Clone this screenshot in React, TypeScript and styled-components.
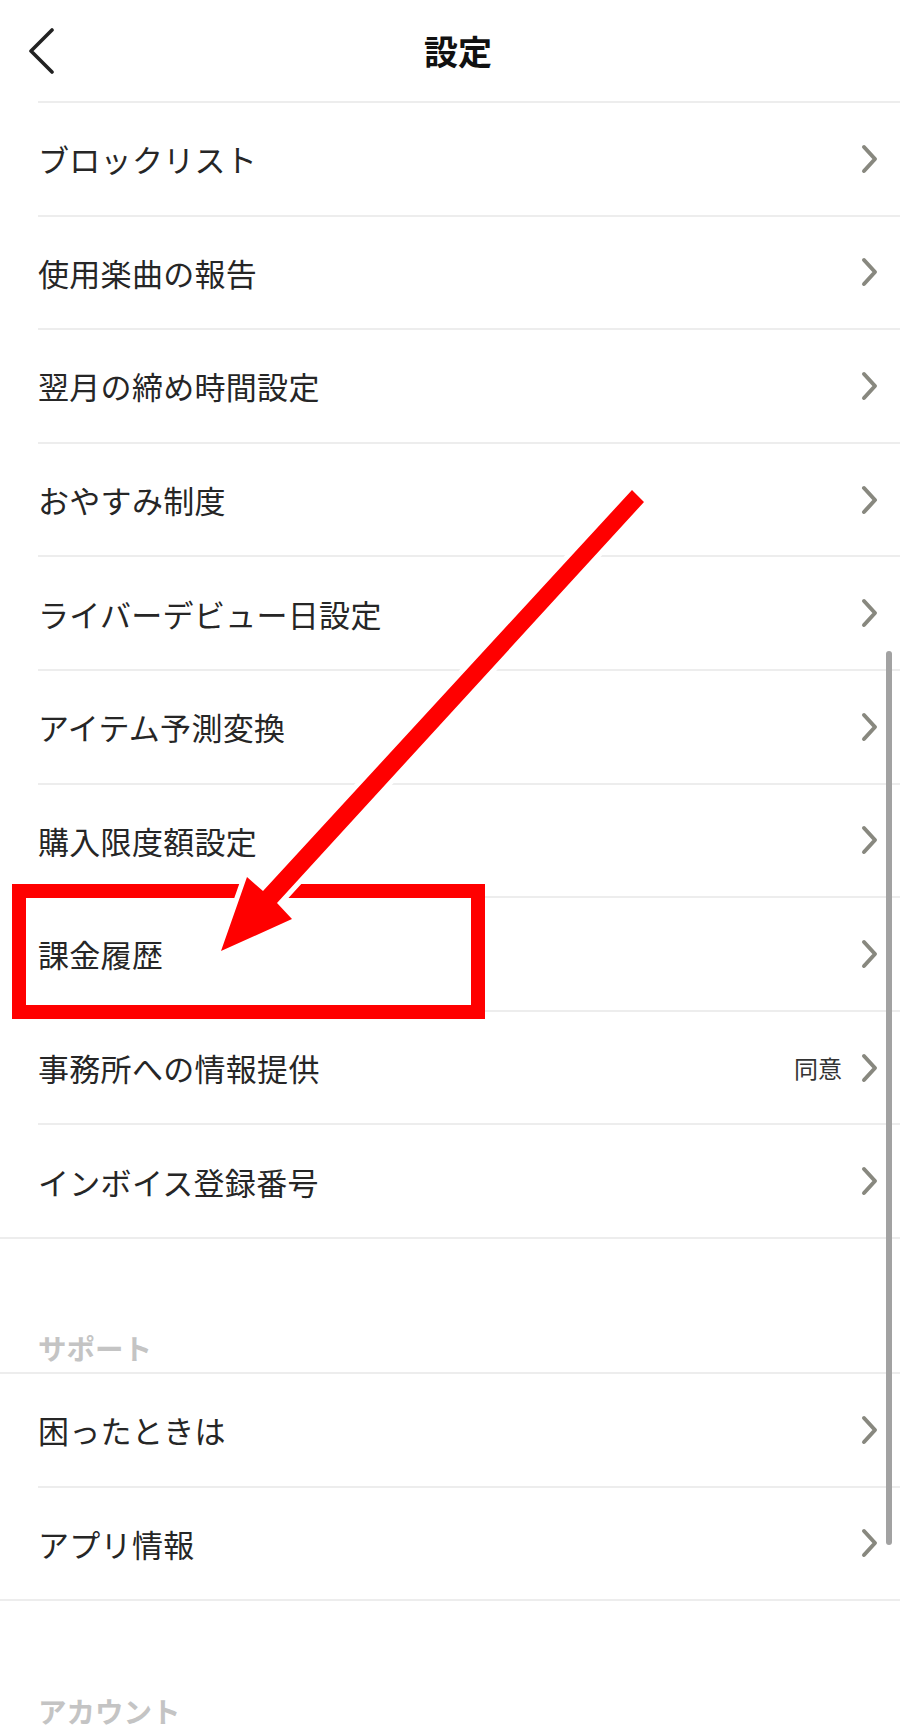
import React from "react";
import styled, { createGlobalStyle } from "styled-components";

const GlobalStyle = createGlobalStyle`
  html, body { margin: 0; padding: 0; background: #ffffff; }
  body { font-family: "Noto Sans CJK JP", "Noto Sans", sans-serif; }
  * { box-sizing: border-box; }
`;

const Page = styled.div`
  position: relative;
  width: 900px;
  height: 1729px;
  overflow: hidden;
  background: #ffffff;
  font-family: "Noto Sans CJK JP", "Noto Sans", sans-serif;
`;

const Header = styled.header`
  height: 101px;
  display: grid;
  grid-template-columns: 100px 1fr 84px;
  align-items: center;
`;

const BackButton = styled.button`
  border: 0;
  background: none;
  padding: 0 0 0 28px;
  height: 48px;
  display: flex;
  align-items: center;
  cursor: pointer;
`;

const Title = styled.h1`
  margin: 0;
  text-align: center;
  font-size: 34px;
  font-weight: 700;
  color: #111111;
  line-height: 1;
`;

const List = styled.section<{ $edgeTop?: boolean }>`
  border-bottom: 2px solid #ededed;
  border-top: ${(p) => (p.$edgeTop ? "2px solid #ededed" : "none")};
`;

const Divider = styled.div`
  height: 2px;
  margin-left: 38px;
  background: #ededed;
`;

const Row = styled.div`
  height: 111.6px;
  display: flex;
  align-items: center;
  padding: 0 22px 0 38px;
`;

const Label = styled.span`
  flex: 1;
  font-size: 31px;
  color: #262626;
  line-height: 1;
  letter-spacing: 0.3px;
`;

const Value = styled.span`
  font-size: 24px;
  color: #333333;
  margin-right: 19px;
  line-height: 1;
`;

const SectionTitle = styled.div`
  height: 133px;
  display: flex;
  align-items: flex-end;
  padding: 0 38px 9px;
  font-size: 28.5px;
  font-weight: 700;
  color: #c4c4c4;
  line-height: 1;
`;

const ScrollIndicator = styled.div`
  position: absolute;
  left: 886px;
  top: 651px;
  width: 6px;
  height: 894px;
  border-radius: 3px;
  background: #a2a2a2;
`;

const Annotation = styled.svg`
  position: absolute;
  left: 0;
  top: 0;
  width: 900px;
  height: 1729px;
  pointer-events: none;
`;

const Chevron = () => (
  <svg width="17" height="30" viewBox="0 0 17 30">
    <polyline
      points="3,3 14,15 3,27"
      fill="none"
      stroke="#88887f"
      strokeWidth="4"
      strokeLinecap="round"
      strokeLinejoin="round"
    />
  </svg>
);

const BackIcon = () => (
  <svg width="28" height="46" viewBox="0 0 28 46">
    <polyline
      points="24,2 3,23 24,44"
      fill="none"
      stroke="#222222"
      strokeWidth="3.6"
      strokeLinecap="round"
      strokeLinejoin="round"
    />
  </svg>
);

type Item = { label: string; value?: string };

const mainItems: Item[] = [
  { label: "ブロックリスト" },
  { label: "使用楽曲の報告" },
  { label: "翌月の締め時間設定" },
  { label: "おやすみ制度" },
  { label: "ライバーデビュー日設定" },
  { label: "アイテム予測変換" },
  { label: "購入限度額設定" },
  { label: "課金履歴" },
  { label: "事務所への情報提供", value: "同意" },
  { label: "インボイス登録番号" },
];

const supportItems: Item[] = [{ label: "困ったときは" }, { label: "アプリ情報" }];

const SettingRow = ({ item }: { item: Item }) => (
  <Row>
    <Label>{item.label}</Label>
    {item.value && <Value>{item.value}</Value>}
    <Chevron />
  </Row>
);

export default function App() {
  return (
    <Page>
      <GlobalStyle />
      <Header>
        <BackButton aria-label="戻る">
          <BackIcon />
        </BackButton>
        <Title>設定</Title>
        <span />
      </Header>

      <List>
        {mainItems.map((item) => (
          <React.Fragment key={item.label}>
            <Divider />
            <SettingRow item={item} />
          </React.Fragment>
        ))}
      </List>

      <SectionTitle>サポート</SectionTitle>
      <List $edgeTop>
        {supportItems.map((item, i) => (
          <React.Fragment key={item.label}>
            {i > 0 && <Divider />}
            <SettingRow item={item} />
          </React.Fragment>
        ))}
      </List>

      <SectionTitle>アカウント</SectionTitle>

      <ScrollIndicator />

      <Annotation viewBox="0 0 900 1729">
        <rect x="19" y="891" width="459" height="121" fill="none" stroke="#ff0000" strokeWidth="14" />
        <polygon
          points="632,490 644,502 277,903 292,919 221,951 247,877 263,891"
          fill="#ff0000"
          stroke="#ffffff"
          strokeWidth="10"
          strokeLinejoin="miter"
          paintOrder="stroke"
        />
      </Annotation>
    </Page>
  );
}
